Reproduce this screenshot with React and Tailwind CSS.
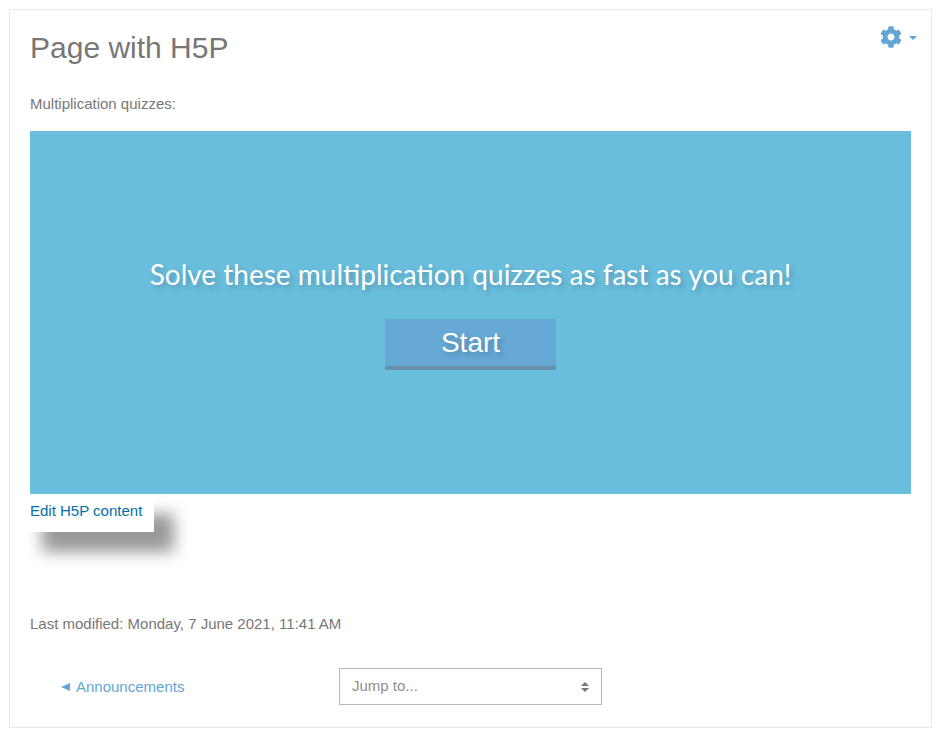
import { FaCog } from 'react-icons/fa';

const sans = { fontFamily: '"Liberation Sans", Arial, sans-serif' };

const App = () => {
  return (
    <div className="bg-white min-h-[735px] pt-[9px] px-[9px] font-['Liberation_Sans',Arial,sans-serif]">
      <div className="relative h-[719px] border border-[#e9e9e9] px-5 pt-5">
        <div className="absolute right-[14px] top-[16px] flex items-center gap-[7px] text-[#64a5d6]">
          <FaCog className="w-[22px] h-[22px]" />
          <span className="w-0 h-0 border-x-[4px] border-x-transparent border-t-[4px] border-t-[#64a5d6] mt-[2px]" />
        </div>

        <h1 className="text-[30px] leading-[36px] text-[#777] font-normal">Page with H5P</h1>
        <p className="mt-[27px] text-[15px] leading-[22px] text-[#777]">Multiplication quizzes:</p>

        <div className="mt-[16px] h-[363px] w-[881px] bg-[#69bedd] flex flex-col items-center pt-[125px]">
          <div className="font-['Lato',sans-serif] text-[28px] leading-[36px] text-white [text-shadow:3px_3px_5px_rgba(0,0,0,0.2)]">
            Solve these multiplication quizzes as fast as you can!
          </div>
          <div className="mt-[27px] w-[171px] h-[51px] bg-[#66a8d4] border-b-[4px] border-b-[#6a8fa8] flex items-center justify-center text-[28px] text-white [text-shadow:3px_3px_5px_rgba(0,0,0,0.2)]">
            Start
          </div>
        </div>

        <div className="relative -ml-2 w-[132px] h-[38px] bg-white shadow-[20px_20px_15px_#999] pl-2 pt-[6px]">
          <a href="#" className="text-[15px] leading-[22px] text-[#0070a8] block">Edit H5P content</a>
        </div>

        <p className="mt-[81px] text-[15px] leading-[22px] text-[#777]">Last modified: Monday, 7 June 2021, 11:41 AM</p>

        <div className="mt-[33px] flex items-center">
          <a href="#" className="ml-[31px] w-[278px] text-[15px] leading-[22px] text-[#64a5d6] flex items-center gap-[6px]">
            <span className="w-0 h-0 border-y-[4px] border-y-transparent border-r-[9px] border-r-[#64a5d6]" />
            Announcements
          </a>
          <div className="w-[263px] h-[37px] border border-[#b8b8b8] pl-3 pr-3 flex items-center justify-between text-[15px] text-[#8f8f8f]">
            <span style={sans}>Jump to...</span>
            <span className="flex flex-col gap-[2px]">
              <span className="w-0 h-0 border-x-[4px] border-x-transparent border-b-[4px] border-b-[#777]" />
              <span className="w-0 h-0 border-x-[4px] border-x-transparent border-t-[4px] border-t-[#777]" />
            </span>
          </div>
        </div>
      </div>
    </div>
  );
};

export default App;
